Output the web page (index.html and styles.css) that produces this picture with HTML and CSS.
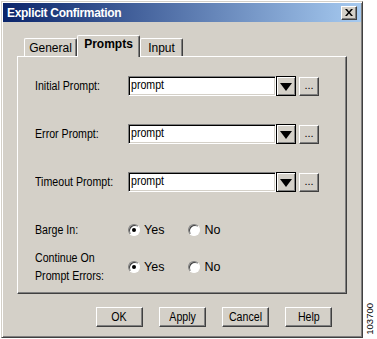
FILE: index.html
```html
<!DOCTYPE html>
<html>
<head lang="en">
    <meta charset="UTF-8">
    <title>Explicit Confirmation</title>
    <link rel="stylesheet" href="styles.css">
</head>
<body>
<div class="page">
    <div class="window">
        <div class="titlebar">
            <span class="title">Explicit Confirmation</span>
            <span class="close">
                <svg width="8" height="7" viewBox="0 0 8 7"><path d="M0 0h2l2 2.5L6 0h2L5 3.5 8 7H6L4 4.5 2 7H0l3-3.5z" fill="#000"/></svg>
            </span>
        </div>
        <div class="content">
            <div class="tabs">
                <div class="tab">General</div>
                <div class="tab active">Prompts</div>
                <div class="tab">Input</div>
            </div>
            <div class="panel">
                <div class="row prompt-row">
                    <label class="label">Initial Prompt:</label>
                    <div class="field"><span class="narrow">prompt</span></div>
                    <span class="drop"><svg width="12" height="8" viewBox="0 0 12 8"><path d="M0 0h12L6 8z" fill="#000"/></svg></span>
                    <span class="more">...</span>
                </div>
                <div class="row prompt-row">
                    <label class="label">Error Prompt:</label>
                    <div class="field"><span class="narrow">prompt</span></div>
                    <span class="drop"><svg width="12" height="8" viewBox="0 0 12 8"><path d="M0 0h12L6 8z" fill="#000"/></svg></span>
                    <span class="more">...</span>
                </div>
                <div class="row prompt-row">
                    <label class="label">Timeout Prompt:</label>
                    <div class="field"><span class="narrow">prompt</span></div>
                    <span class="drop"><svg width="12" height="8" viewBox="0 0 12 8"><path d="M0 0h12L6 8z" fill="#000"/></svg></span>
                    <span class="more">...</span>
                </div>
                <div class="row radio-row barge">
                    <label class="label">Barge In:</label>
                    <span class="option"><span class="radio checked"></span>Yes</span>
                    <span class="option"><span class="radio"></span>No</span>
                </div>
                <div class="row radio-row errors">
                    <label class="label">Continue On<br>Prompt Errors:</label>
                    <span class="option"><span class="radio checked"></span>Yes</span>
                    <span class="option"><span class="radio"></span>No</span>
                </div>
            </div>
            <div class="buttons">
                <span class="btn"><span class="narrow">OK</span></span>
                <span class="btn"><span class="narrow">Apply</span></span>
                <span class="btn"><span class="narrow">Cancel</span></span>
                <span class="btn"><span class="narrow">Help</span></span>
            </div>
        </div>
    </div>
    <div class="figure-id">103700</div>
</div>
</body>
</html>
```

FILE: styles.css
```css
*{
    margin: 0;
    padding: 0;
    box-sizing: border-box;
}
body {
    background: #fff;
    font: 12px "Liberation Sans", Arial, sans-serif;
    color: #000;
}
.page {
    display: flex;
    height: 339px;
}
.window {
    width: 362px;
    height: 337px;
    margin: 1px 0 0 1px;
    padding: 1px;
    background: #d4d0c8;
    border: 1px solid;
    border-color: #d4d0c8 #404040 #404040 #d4d0c8;
    box-shadow: inset 1px 1px #fff, inset -1px -1px #808080;
}
.titlebar {
    height: 19px;
    display: flex;
    align-items: center;
    justify-content: space-between;
    padding: 0 4px 0 4px;
    background: linear-gradient(to right, #0a246a, #a6caf0);
}
.title {
    color: #fff;
    font-weight: bold;
    letter-spacing: -0.3px;
}
.close {
    width: 16px;
    height: 14px;
    display: flex;
    align-items: center;
    justify-content: center;
    background: #d4d0c8;
    border: 1px solid;
    border-color: #fff #404040 #404040 #fff;
    box-shadow: inset -1px -1px #808080;
}
.content {
    padding: 13px 0 0 14px;
}
.tabs {
    display: flex;
    align-items: flex-end;
    height: 21px;
    margin-left: 7px;
    position: relative;
    z-index: 1;
}
.tab {
    height: 18px;
    padding: 2px 0 0 0;
    text-align: center;
    border: 1px solid;
    border-bottom: none;
    border-color: #fff #404040 #404040 #fff;
    box-shadow: inset -1px 0 #808080;
    border-radius: 2px 2px 0 0;
    background: #d4d0c8;
}
.tab:nth-child(1) { width: 53px; }
.tab:nth-child(3) { width: 43px; }
.tab.active {
    width: 63px;
    height: 22px;
    margin-bottom: -1px;
    font-weight: bold;
    padding-top: 1px;
}
.panel {
    width: 330px;
    height: 238px;
    padding: 19px 0 0 17px;
    border: 1px solid;
    border-color: #fff #404040 #404040 #fff;
    box-shadow: inset -1px -1px #808080;
}
/* the screenshot text is squeezed sideways */
.label,
.narrow {
    font-size: 12.5px;
    transform: scaleX(0.85);
}
.label {
    transform-origin: left center;
}
.narrow {
    display: inline-block;
}
.row {
    display: flex;
    align-items: center;
}
.label {
    width: 93px;
    line-height: 18px;
}
.prompt-row {
    height: 20px;
    margin-bottom: 28px;
}
.field {
    width: 148px;
    height: 20px;
    padding: 1px 0 0 2px;
    background: #fff;
    border: 1px solid;
    border-color: #808080 #fff #fff #808080;
    box-shadow: inset 1px 1px #000, inset -1px -1px #d4d0c8;
}
.field .narrow {
    transform-origin: left center;
}
.drop {
    width: 20px;
    height: 20px;
    display: flex;
    align-items: center;
    justify-content: center;
    padding-top: 1px;
    background: #d4d0c8;
    border: 1px solid #000;
    box-shadow: inset 1px 1px #fff, inset -1px -1px #808080;
}
.more {
    width: 20px;
    height: 19px;
    margin-left: 3px;
    text-align: center;
    font-size: 11px;
    line-height: 14px;
    background: #d4d0c8;
    border: 1px solid;
    border-color: #fff #404040 #404040 #fff;
    box-shadow: inset -1px -1px #808080;
}
.radio-row.barge {
    height: 20px;
    margin-top: 1px;
}
.radio-row.errors {
    height: 36px;
    margin-top: 9px;
}
.option {
    display: flex;
    align-items: center;
    gap: 4px;
    margin-right: 24px;
    font-size: 12.5px;
}
.radio {
    width: 12px;
    height: 12px;
    border-radius: 50%;
    background: #fff;
    border: 1px solid;
    border-color: #808080 #fff #fff #808080;
    box-shadow: inset 1px 1px #404040;
    display: flex;
    align-items: center;
    justify-content: center;
}
.radio.checked::after {
    content: "";
    width: 4px;
    height: 4px;
    border-radius: 50%;
    background: #000;
}
.buttons {
    display: flex;
    gap: 16px;
    margin: 13px 0 0 79px;
}
.btn {
    width: 47px;
    height: 20px;
    line-height: 18px;
    text-align: center;
    background: #d4d0c8;
    border: 1px solid;
    border-color: #fff #404040 #404040 #fff;
    box-shadow: inset -1px -1px #808080;
}
.figure-id {
    align-self: flex-end;
    margin: 0 0 4px 2px;
    writing-mode: vertical-rl;
    transform: rotate(180deg);
    font: 9.5px "Liberation Sans", Arial, sans-serif;
    line-height: 9px;
}
```
